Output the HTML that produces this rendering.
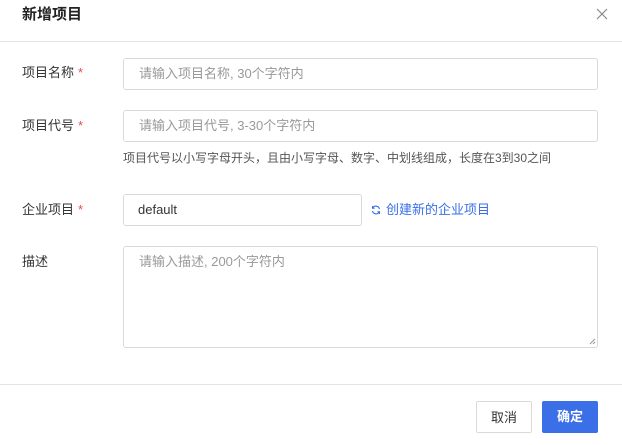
<!DOCTYPE html>
<html><head><meta charset="utf-8"><style>
body{margin:0;width:622px;height:445px;background:#fff;font-family:"Liberation Sans","Noto Sans CJK SC",sans-serif;position:relative;overflow:hidden;color:#333}
.a{position:absolute}
.title{left:22px;top:5px;font-size:15px;font-weight:bold;color:#222;line-height:20px}
.hr{left:0;width:622px;height:1px;background:#e3e3e8}
.lbl{left:22px;font-size:13px;color:#333;line-height:20px}
.lbl i{color:#e34d4d;font-style:normal;margin-left:4px}
.inp{border:1px solid #d9d9d9;border-radius:3px;box-sizing:border-box;font-size:13px;color:#999;padding-left:15px;line-height:30px}
.btn{box-sizing:border-box;border-radius:2px;font-size:13px;text-align:center;line-height:31px;height:32px}
</style></head><body>
<div class="a title">新增项目</div>
<svg class="a" style="left:596px;top:8px" width="12" height="12" viewBox="0 0 12 12"><path d="M1 1L11 11M11 1L1 11" stroke="#888" stroke-width="1.2"/></svg>
<div class="a hr" style="top:41px"></div>
<div class="a lbl" style="top:63px">项目名称<i>*</i></div>
<div class="a inp" style="left:123px;top:58px;width:475px;height:32px">请输入项目名称, 30个字符内</div>
<div class="a lbl" style="top:116px">项目代号<i>*</i></div>
<div class="a inp" style="left:123px;top:110px;width:475px;height:32px">请输入项目代号, 3-30个字符内</div>
<div class="a" style="left:123px;top:148px;font-size:12px;color:#555;line-height:20px">项目代号以小写字母开头，且由小写字母、数字、中划线组成，长度在3到30之间</div>
<div class="a lbl" style="top:200px">企业项目<i>*</i></div>
<div class="a inp" style="left:123px;top:194px;width:239px;height:32px;color:#333;padding-left:14px">default</div>
<svg class="a" style="left:371px;top:205px" width="10" height="10" viewBox="0 0 10 10"><path d="M8.5 4A3.6 3.6 0 0 0 1.8 3M1.5 6A3.6 3.6 0 0 0 8.2 7" fill="none" stroke="#3a6fe8" stroke-width="1.1"/><path d="M1.5 1v2.2h2.2M8.5 9V6.8H6.3" fill="none" stroke="#3a6fe8" stroke-width="1.1"/></svg>
<div class="a" style="left:386px;top:200px;font-size:13px;color:#3a6fe8;line-height:20px">创建新的企业项目</div>
<div class="a lbl" style="top:252px">描述</div>
<div class="a inp" style="left:123px;top:246px;width:475px;height:102px;line-height:30px">请输入描述, 200个字符内</div>
<svg class="a" style="left:588px;top:337px" width="8" height="8" viewBox="0 0 8 8"><path d="M7 2L2 7M7 5L5 7" stroke="#999" stroke-width="1"/></svg>
<div class="a hr" style="top:384px"></div>
<div class="a btn" style="left:476px;top:401px;width:56px;border:1px solid #d9d9d9;color:#333">取消</div>
<div class="a btn" style="left:542px;top:401px;width:56px;background:#3a6fe8;color:#fff;font-weight:bold">确定</div>
</body></html>
